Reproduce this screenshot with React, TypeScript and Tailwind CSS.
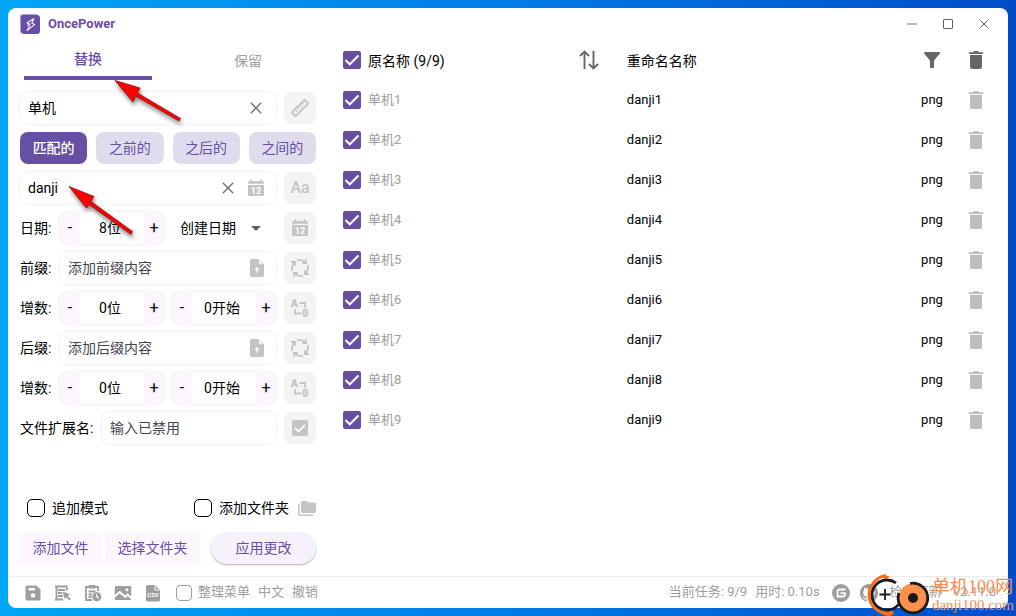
import { useState } from 'react';
import type { ReactNode } from 'react';

const modes = ['匹配的', '之前的', '之后的', '之间的'];

const files = Array.from({ length: 9 }, (_, i) => ({
  name: `单机${i + 1}`,
  renamed: `danji${i + 1}`,
  ext: 'png',
}));

function BoltLogo() {
  return (
    <svg width="20" height="20" viewBox="0 0 20 20" fill="none" aria-hidden="true">
      <rect x="0" y="0" width="18" height="19" rx="3" fill="#a99bcf" />
      <rect x="1" y="1" width="19" height="19" rx="3" fill="#6750a4" />
      <path d="M14 4.5 7 9l3 1.200-2.800 1.300M14 4.500l-2.200 4.700 3 1.200L7 16.500l2.800-5" stroke="#f1ecfa" strokeWidth="1.100" strokeLinejoin="round" />
    </svg>
  );
}

function ClearIcon() {
  return (
    <svg width="12" height="12" viewBox="0 0 12 12" stroke="#757575" strokeWidth="1.5" aria-hidden="true">
      <path d="M.8.8l10.4 10.4M11.2.8.8 11.2" />
    </svg>
  );
}

function RulerIcon() {
  return (
    <svg width="20" height="20" viewBox="0 0 20 20" fill="none" stroke="#c4c4c4" strokeWidth="1.8" strokeLinejoin="round" aria-hidden="true">
      <path d="M14.5 1.800 18.300 5.600 5.500 18.200 1.700 14.400z" />
      <path d="m5 11.3 2.200 2.200M7.400 9l1.800 1.800M9.700 6.700l2.200 2.200M12 4.400l1.800 1.800" strokeWidth="1.4" />
    </svg>
  );
}

function CalendarIcon() {
  return (
    <svg width="16" height="18" viewBox="0 0 16 18" fill="#c4c4c4" aria-hidden="true">
      <path d="M1.5 2H2.5V.4h1.800V2h7.400V.4h1.800V2h1A1.5 1.5 0 0 1 16 3.500V4.800H0V3.500A1.500 1.500 0 0 1 1.500 2z" />
      <path d="M0 6h16v9.500a1.500 1.500 0 0 1-1.500 1.500h-13A1.500 1.500 0 0 1 0 15.500z" />
      <text x="8" y="14.800" fill="#fff" fontSize="9" fontWeight="700" fontFamily="Roboto, sans-serif" textAnchor="middle">12</text>
    </svg>
  );
}

function FileUpIcon() {
  return (
    <svg width="14" height="18" viewBox="0 0 14 18" aria-hidden="true">
      <path d="M1.800 0H8.500L14 5.500v10.700A1.800 1.800 0 0 1 12.200 18H1.800A1.800 1.800 0 0 1 0 16.200V1.800A1.800 1.800 0 0 1 1.800 0z" fill="#c4c4c4" />
      <path d="M8.800 1.200V5.200h4z" fill="#fff" />
      <path d="M7 8 4.500 10.700h1.800v3h1.400v-3h1.800z" fill="#fff" />
    </svg>
  );
}

function CycleIcon() {
  return (
    <svg width="20" height="20" viewBox="0 0 20 20" fill="none" stroke="#c4c4c4" strokeWidth="1.800" aria-hidden="true">
      {[0, 90, 180, 270].map((deg) => (
        <g key={deg} transform={`rotate(${deg} 10 10)`}>
          <path d="M7 2.200Q11.500.9 15 4.300M16 1.200V5H12.200" />
        </g>
      ))}
    </svg>
  );
}

function AlphaNumIcon() {
  return (
    <svg width="18" height="18" viewBox="0 0 18 18" fill="none" stroke="#c4c4c4" strokeWidth="1.800" aria-hidden="true">
      <text x="0" y="8" fill="#c4c4c4" strokeWidth="0.500" fontSize="10" fontWeight="700" fontFamily="Roboto, sans-serif">A</text>
      <text x="11.500" y="17.500" fill="#c4c4c4" strokeWidth="0.500" fontSize="10" fontWeight="700" fontFamily="Roboto, sans-serif">0</text>
      <path d="M8.500 4H14v4.500M4 10v4.500h6.500" />
    </svg>
  );
}

function TrashIcon({ color }: { color: string }) {
  return (
    <svg width="14" height="18" viewBox="0 0 14 18" fill={color} aria-hidden="true">
      <path d="M0 1.200h4.200L5 0h4l.8 1.200H14V3H0z" />
      <path d="M1 4h12v11.800A2.200 2.200 0 0 1 10.800 18H3.200A2.200 2.200 0 0 1 1 15.800z" />
    </svg>
  );
}

function Box({ label, children }: { label: string; children: ReactNode }) {
  return (
    <button type="button" aria-label={label} className="flex size-8 shrink-0 items-center justify-center rounded-lg bg-[#f4f4f4]">
      {children}
    </button>
  );
}

function Tick({ label }: { label: string }) {
  return (
    <span className="relative block size-[18px]">
      <input type="checkbox" defaultChecked aria-label={label} className="peer block size-[18px] appearance-none rounded-xs border-2 border-[#6750a4] checked:bg-[#6750a4]" />
      <svg viewBox="0 0 18 18" fill="none" stroke="#fff" strokeWidth="2" className="pointer-events-none absolute inset-0 hidden peer-checked:block" aria-hidden="true">
        <path d="m2.500 9 4.300 4.300L15.500 4.500" />
      </svg>
    </span>
  );
}

function Field({ id, label, children, ...rest }: { id: string; label: string; value?: string; placeholder?: string; children?: ReactNode }) {
  return (
    <div className="flex h-8 min-w-0 flex-1 items-center gap-3.5 rounded-lg bg-white pr-3 pl-2 shadow-[0_0_3px_rgba(0,0,0,0.12)]">
      <input
        id={id}
        aria-label={label}
        defaultValue={rest.value}
        placeholder={rest.placeholder}
        className="w-0 min-w-0 flex-1 bg-transparent text-black outline-none placeholder:text-[#49454f]"
      />
      {children}
    </div>
  );
}

function Stepper({ label, value }: { label: string; value: string }) {
  return (
    <div className="flex h-8 w-[104px] shrink-0 overflow-hidden rounded-lg bg-white shadow-[0_0_3px_rgba(0,0,0,0.12)]">
      <button type="button" aria-label={`${label} 减`} className="w-5 bg-[#fdf6ff] text-base">-</button>
      <input aria-label={label} defaultValue={value} className="w-0 min-w-0 flex-1 pr-1 text-center outline-none" />
      <button type="button" aria-label={`${label} 加`} className="w-5 bg-[#fdf6ff] text-base">+</button>
    </div>
  );
}

function Counter({ title }: { title: string }) {
  return (
    <div className="flex items-center gap-2">
      <span className="w-8 whitespace-nowrap">增数:</span>
      <Stepper label={`${title}位数`} value="0位" />
      <Stepper label={`${title}开始`} value="0开始" />
      <Box label="切换类型"><AlphaNumIcon /></Box>
    </div>
  );
}

function Sidebar() {
  const [tab, setTab] = useState(0);
  const [mode, setMode] = useState(0);

  return (
    <aside className="flex w-80 shrink-0 flex-col">
      <div className="grid h-10 grid-cols-2">
        {['替换', '保留'].map((t, i) => (
          <button
            key={t}
            type="button"
            onClick={() => setTab(i)}
            className={`mx-4 pt-0.5 ${tab === i ? 'border-b-4 border-[#6750a4] font-medium text-[#6750a4]' : 'text-[#9e9e9e]'}`}
          >
            {t}
          </button>
        ))}
      </div>

      <div className="flex flex-col gap-2 px-3 pt-3">
        <div className="flex gap-2">
          <Field id="match" label="匹配内容" value="单机">
            <button type="button" aria-label="清空" className="mr-0.5"><ClearIcon /></button>
          </Field>
          <Box label="匹配长度"><RulerIcon /></Box>
        </div>

        <div className="grid grid-cols-4 gap-[9px]">
          {modes.map((m, i) => (
            <button
              key={m}
              type="button"
              onClick={() => setMode(i)}
              className={`h-8 rounded-lg ${mode === i ? 'bg-[#6750a4] font-medium text-white' : 'bg-[#e0dbed] text-[#6750a4]'}`}
            >
              {m}
            </button>
          ))}
        </div>

        <div className="flex gap-2">
          <Field id="modify" label="修改为" value="danji">
            <button type="button" aria-label="清空"><ClearIcon /></button>
            <button type="button" aria-label="插入日期"><CalendarIcon /></button>
          </Field>
          <Box label="大小写"><span className="text-base font-medium text-[#c4c4c4]">Aa</span></Box>
        </div>

        <div className="flex items-center gap-2">
          <span className="w-8 whitespace-nowrap">日期:</span>
          <Stepper label="日期位数" value="8位" />
          <div className="relative flex-1">
            <select aria-label="日期类型" className="h-8 w-full appearance-none bg-transparent pl-2 outline-none">
              <option>创建日期</option>
              <option>修改日期</option>
            </select>
            <svg width="10" height="5" viewBox="0 0 10 5" fill="#616161" className="pointer-events-none absolute top-3.5 right-[15px]" aria-hidden="true">
              <path d="M0 0h10L5 5z" />
            </svg>
          </div>
          <Box label="使用日期"><CalendarIcon /></Box>
        </div>

        <div className="flex items-center gap-2">
          <label htmlFor="prefix" className="w-8 whitespace-nowrap">前缀:</label>
          <Field id="prefix" label="前缀" placeholder="添加前缀内容">
            <button type="button" aria-label="上传前缀文件"><FileUpIcon /></button>
          </Field>
          <Box label="循环前缀"><CycleIcon /></Box>
        </div>
        <Counter title="前缀" />

        <div className="flex items-center gap-2">
          <label htmlFor="suffix" className="w-8 whitespace-nowrap">后缀:</label>
          <Field id="suffix" label="后缀" placeholder="添加后缀内容">
            <button type="button" aria-label="上传后缀文件"><FileUpIcon /></button>
          </Field>
          <Box label="循环后缀"><CycleIcon /></Box>
        </div>
        <Counter title="后缀" />

        <div className="flex items-center gap-2">
          <label htmlFor="ext" className="w-[74px] whitespace-nowrap">文件扩展名:</label>
          <Field id="ext" label="文件扩展名" placeholder="输入已禁用" />
          <Box label="启用扩展名">
            <svg width="16" height="16" viewBox="0 0 16 16" aria-hidden="true">
              <rect width="16" height="16" rx="2" fill="#c4c4c4" />
              <path d="m3 8 3.500 3.500L13 4.800" fill="none" stroke="#fff" strokeWidth="1.800" />
            </svg>
          </Box>
        </div>
      </div>

      <div className="mt-auto flex flex-col gap-2 px-3 pb-3">
        <div className="flex h-8 items-center justify-between pl-[7px]">
          <label className="flex items-center gap-[7px]">
            <input type="checkbox" className="size-[18px] appearance-none rounded-[5px] border border-black" />
            追加模式
          </label>
          <div className="flex items-center gap-[9px]">
            <label className="flex items-center gap-[7px]">
              <input type="checkbox" className="size-[18px] appearance-none rounded-[5px] border border-black" />
              添加文件夹
            </label>
            <svg width="18" height="16" viewBox="0 0 18 16" fill="#c4c4c4" aria-hidden="true">
              <path d="M4.500 1H9l1.600 1.600H16.500A1.500 1.500 0 0 1 18 4.100v7.400A1.500 1.500 0 0 1 16.500 13h-12A1.500 1.500 0 0 1 3 11.500v-9A1.500 1.500 0 0 1 4.500 1z" />
              <path d="M0 4h1.600v10.400H15V16H1.500A1.500 1.500 0 0 1 0 14.500z" />
            </svg>
          </div>
        </div>
        <div className="flex h-8 gap-1 text-[#6750a4]">
          <button type="button" className="w-[81px] bg-[#fdf6ff]">添加文件</button>
          <button type="button" className="w-[95px] bg-[#fdf6ff]">选择文件夹</button>
          <button type="button" className="ml-[7px] flex-1 rounded-full bg-[#f6f1fa] shadow-[0_1px_2px_rgba(0,0,0,0.3)]">应用更改</button>
        </div>
      </div>
    </aside>
  );
}

function FileTable() {
  return (
    <table className="w-full table-fixed self-start text-left text-[13px]">
      <colgroup>
        <col className="w-10" />
        <col className="w-[31%]" />
        <col className="w-12" />
        <col />
        <col className="w-[60px]" />
        <col className="w-[46px]" />
      </colgroup>
      <thead>
        <tr className="h-10 text-sm">
          <th className="pl-[15px]"><Tick label="全选" /></th>
          <th className="pt-px font-normal">原名称 (9/9)</th>
          <th>
            <button type="button" aria-label="排序" className="block">
              <svg width="20" height="20" viewBox="0 0 20 20" fill="none" stroke="#666" strokeWidth="1.900" aria-hidden="true">
                <path d="M5.500 19V1.800M1 6l4.500-4.500L10 6M14.500 1v17.200M10 14l4.500 4.500L19 14" />
              </svg>
            </button>
          </th>
          <th className="pt-px font-normal">重命名名称</th>
          <th>
            <button type="button" aria-label="筛选" className="mx-auto block">
              <svg width="18" height="18" viewBox="0 0 18 18" fill="#666" aria-hidden="true">
                <path d="M1.800 1h14.400a.9.900 0 0 1 .7 1.500L11 9.500v6.500a1 1 0 0 1-1 1H8a1 1 0 0 1-1-1V9.500L1.100 2.500A.9.900 0 0 1 1.800 1z" />
              </svg>
            </button>
          </th>
          <th>
            <button type="button" aria-label="清空列表" className="ml-[7px] block"><TrashIcon color="#666" /></button>
          </th>
        </tr>
      </thead>
      <tbody>
        {files.map((f) => (
          <tr key={f.name} className="h-10">
            <td className="pl-[15px]"><Tick label={f.name} /></td>
            <td colSpan={2} className="pt-px text-[#9e9e9e]">{f.name}</td>
            <td className="pt-px">{f.renamed}</td>
            <td className="pt-px text-center">{f.ext}</td>
            <td>
              <button type="button" aria-label={`移除 ${f.name}`} className="ml-[7px] block"><TrashIcon color="#bdbdbd" /></button>
            </td>
          </tr>
        ))}
      </tbody>
    </table>
  );
}

function StatusBar() {
  return (
    <footer className="flex h-8 items-center justify-between border-t border-[#ececec] px-3 text-[13px] whitespace-nowrap text-[#9e9e9e]">
      <div className="flex items-center gap-2">
        <div className="flex items-center gap-3 pr-1.5 pl-1">
          <button type="button" aria-label="保存">
            <svg width="18" height="18" viewBox="0 0 18 18" aria-hidden="true">
              <path d="M3 1.500h9.500L16.500 5.500V15a1.500 1.500 0 0 1-1.500 1.500H3A1.500 1.500 0 0 1 1.500 15V3A1.500 1.500 0 0 1 3 1.500z" fill="#9e9e9e" />
              <path d="M4.500 4h6.500v2.500H4.500z" fill="#fff" />
              <circle cx="9" cy="11.500" r="2.300" fill="#fff" />
            </svg>
          </button>
          <button type="button" aria-label="日志">
            <svg width="18" height="18" viewBox="0 0 18 18" fill="none" stroke="#9e9e9e" strokeWidth="1.800" aria-hidden="true">
              <path d="M1 2.500h12.500M1 15.500h8M2.500 2v14M12.800 2v4.500M4 6h7M4 9h4M4 12h5" />
              <path d="m8.500 7.500 8 3-3 1.200 3.200 3.300-1.400 1.400-3.300-3.300-1 2.600z" fill="#9e9e9e" stroke="none" />
            </svg>
          </button>
          <button type="button" aria-label="时间记录">
            <svg width="18" height="18" viewBox="0 0 18 18" fill="none" stroke="#9e9e9e" strokeWidth="1.800" aria-hidden="true">
              <path d="M8 16H2V3h12v4M4.500 7.500h7M4.500 10.500h3.500M4.500 13h3" />
              <path d="M5 1h6.500v3.500H5z" fill="#9e9e9e" stroke="none" />
              <circle cx="12.800" cy="12.800" r="4.500" fill="#9e9e9e" stroke="none" />
              <path d="M12.800 10.300v2.700l2 1.300" stroke="#fff" strokeWidth="1.200" />
            </svg>
          </button>
          <button type="button" aria-label="图片">
            <svg width="18" height="18" viewBox="0 0 18 18" aria-hidden="true">
              <path d="M2 2h14a1.200 1.200 0 0 1 1.200 1.200v11.600A1.200 1.200 0 0 1 16 16H2a1.200 1.200 0 0 1-1.200-1.200V3.200A1.200 1.200 0 0 1 2 2z" fill="#9e9e9e" />
              <path d="m.3 12.800 5.500-4.800 5.400 5 2.400-2.300 4.100 3.500" fill="none" stroke="#fff" strokeWidth="2" />
              <circle cx="13" cy="5.800" r="1.500" fill="#fff" />
            </svg>
          </button>
          <button type="button" aria-label="CSV">
            <svg width="18" height="18" viewBox="-2 0 18 18" aria-hidden="true">
              <path d="M1.500 1H9l5 5v10a1.500 1.500 0 0 1-1.500 1.500h-11A1.500 1.500 0 0 1 0 16V2.500A1.500 1.500 0 0 1 1.500 1z" fill="#9e9e9e" />
              <path d="M9 1.500V6h4.500" fill="none" stroke="#fff" />
              <text x="7" y="13" fill="#fff" fontSize="6" fontWeight="700" fontFamily="Roboto, sans-serif" textAnchor="middle">CSV</text>
            </svg>
          </button>
        </div>
        <label className="flex items-center gap-1.5">
          <input type="checkbox" className="size-4 appearance-none rounded-[4px] border border-[#9e9e9e]" />
          整理菜单
        </label>
        <button type="button">中文</button>
        <button type="button">撤销</button>
      </div>

      <div className="flex items-center gap-2">
        <span>当前任务: 9/9</span>
        <span>用时: 0.10s</span>
        <a href="#gitee" aria-label="Gitee" className="ml-1">
          <svg width="18" height="18" viewBox="0 0 18 18" aria-hidden="true">
            <circle cx="9" cy="9" r="9" fill="#9e9e9e" />
            <path d="M13.500 5.500H7.500a2 2 0 0 0-2 2v5h5.500a2 2 0 0 0 2-2V9.200H8.500" fill="none" stroke="#fff" strokeWidth="1.800" />
          </svg>
        </a>
        <a href="#github" aria-label="GitHub" className="mr-1 ml-0.5">
          <svg width="18" height="18" viewBox="0 0 16 16" fill="#9e9e9e" aria-hidden="true">
            <path d="M8 0C3.580 0 0 3.580 0 8c0 3.540 2.290 6.530 5.470 7.590.4.070.55-.17.55-.38v-1.490c-2.010.37-2.530-.49-2.690-.94-.09-.23-.48-.94-.82-1.130-.28-.15-.68-.52-.01-.53.63-.01 1.080.58 1.230.82.72 1.210 1.870.87 2.330.66.070-.52.280-.87.510-1.070-1.780-.2-3.640-.89-3.640-3.950 0-.87.310-1.590.82-2.150-.08-.2-.36-1.020.08-2.120 0 0 .67-.21 2.200.82a7.600 7.600 0 0 1 4 0c1.530-1.040 2.200-.82 2.200-.82.440 1.100.160 1.920.080 2.120.51.560.82 1.270.82 2.150 0 3.070-1.870 3.750-3.650 3.950.29.250.54.730.54 1.480v2.200c0 .21.150.46.550.38A8 8 0 0 0 16 8c0-4.420-3.580-8-8-8z" />
          </svg>
        </a>
        <button type="button">检查更新</button>
        <span className="ml-1">v2.11.0</span>
      </div>
    </footer>
  );
}

function Arrow({ path, className }: { path: string; className: string }) {
  return (
    <svg width="70" height="54" viewBox="0 0 70 54" className={className} aria-hidden="true">
      <path d={path} fill="#f00" stroke="#8a1515" strokeWidth="0.800" strokeLinejoin="round" />
    </svg>
  );
}

function Watermark() {
  return (
    <div className="pointer-events-none absolute right-0.5 bottom-0 flex items-center gap-0.5">
      <svg width="64" height="42" viewBox="0 0 64 42" fill="none" aria-hidden="true">
        <path d="M20 1.500C10 3 3 12 3 21s7 18 22 20" stroke="#ff6a13" strokeWidth="3" />
        <path d="M16 3Q20 0 24 3L19 5zM16 37l10-2 2 5-4 2z" fill="#ff6a13" />
        <path d="M30 9A15 15 0 1 0 33 30" stroke="#1c1a1a" strokeWidth="2.800" />
        <path d="M19 15v11M13.500 20.500h11" stroke="#1c1a1a" strokeWidth="1.800" />
        <circle cx="47" cy="24" r="14.500" fill="#ff914d" />
        <path d="M44 9.500A14.800 14.800 0 1 1 33 19" stroke="#1c1a1a" strokeWidth="2.800" />
        <circle cx="47" cy="24" r="5" fill="#1c1a1a" />
      </svg>
      <div className="font-[Liberation_Serif,'Noto_Sans_CJK_SC',serif] text-[#ff8a4a]">
        <p className="text-lg leading-5">单机100网</p>
        <p className="text-[15px] leading-4">danji100.com</p>
      </div>
    </div>
  );
}

export default function App() {
  return (
    <div className="relative flex min-h-screen bg-linear-to-r from-[#00a6f4] via-[#007be8] to-[#004cc8] p-2 font-[Roboto,'Noto_Sans_CJK_SC',sans-serif] text-sm text-black">
      <div className="flex min-w-0 flex-1 flex-col overflow-hidden rounded-lg bg-white">
        <header className="flex h-8 items-center justify-between px-3">
          <div className="flex items-center gap-2">
            <BoltLogo />
            <h1 className="text-[13px] font-bold text-[#6750a4]">OncePower</h1>
          </div>
          <div className="flex items-center gap-[26px] pr-[7px]">
            <button type="button" aria-label="最小化" className="h-0.5 w-2.5 bg-[#bdbdbd]" />
            <button type="button" aria-label="最大化" className="size-2.5 rounded-[1px] border border-[#616161]" />
            <button type="button" aria-label="关闭">
              <svg width="10" height="10" viewBox="0 0 10 10" stroke="#757575" aria-hidden="true">
                <path d="m.5.5 9 9M9.500.5l-9 9" />
              </svg>
            </button>
          </div>
        </header>
        <main className="flex flex-1">
          <Sidebar />
          <FileTable />
        </main>
        <StatusBar />
      </div>
      <Arrow
        path="M2 1.500 27 9l-2.500 5L67.500 39.500 66 42 22.500 17 20 23z"
        className="pointer-events-none absolute top-[79px] left-[113px] drop-shadow-[1px_3px_2px_rgba(0,0,0,0.5)]"
      />
      <Arrow
        path="M2 1.500 27 11.500l-3 5L65.500 46.500 64 49.500 22 19.500 19.500 23z"
        className="pointer-events-none absolute top-[185px] left-[67px] drop-shadow-[1px_3px_2px_rgba(0,0,0,0.5)]"
      />
      <Watermark />
    </div>
  );
}
